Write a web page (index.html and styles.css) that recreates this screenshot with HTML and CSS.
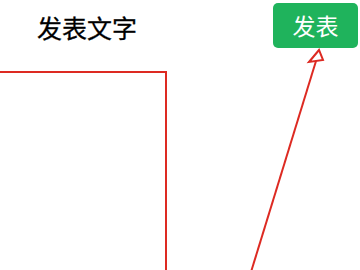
FILE: index.html
```html
<!DOCTYPE html>
<html lang="zh-CN">

<head>
  <meta charset="UTF-8" />
  <meta name="viewport" content="width=device-width, initial-scale=1.0" />
  <title>发表文字</title>
  <link rel="stylesheet" href="styles.css">
</head>

<body>
  <div class="pagina">
    <header class="cabecera">
      <h1 class="titulo">发表文字</h1>
      <button class="boton-publicar" type="button">发表</button>
    </header>

    <div class="marco"></div>

    <!-- flecha de anotación -->
    <svg class="flecha" width="360" height="270" viewBox="0 0 360 270">
      <line x1="316" y1="61" x2="251" y2="272" />
      <polygon points="319,50 309,62 323,60" />
    </svg>
  </div>
</body>

</html>
```
FILE: styles.css
```css
body {
  margin: 0;
  background: #fff;
  font-family: "Noto Sans CJK SC", "Noto Sans", sans-serif;
}

.pagina {
  position: relative;
  width: 360px;
  height: 270px;
  overflow: hidden;
}

.cabecera {
  display: flex;
  justify-content: space-between;
  align-items: flex-start;
  height: 71px;
  padding: 3px 2px 0 37px;
  box-sizing: border-box;
}

.titulo {
  margin: 12px 0 0 0;
  font-size: 25px;
  line-height: 25px;
  font-weight: normal;
  color: #000;
  -webkit-text-stroke: 0.3px #000;
}

.boton-publicar {
  width: 85px;
  height: 45px;
  border: none;
  border-radius: 5px;
  background-color: #1fb35c;
  color: #fff;
  font-family: inherit;
  font-size: 23px;
  line-height: 1;
  padding: 0;
}

.marco {
  width: 167px;
  height: 220px;
  box-sizing: border-box;
  border-top: 2px solid #dd2a22;
  border-right: 2px solid #dd2a22;
}

.flecha {
  position: absolute;
  left: 0;
  top: 0;
}

.flecha line,
.flecha polygon {
  stroke: #dd2a22;
  stroke-width: 2;
  fill: #fff;
  stroke-linejoin: miter;
}
```
